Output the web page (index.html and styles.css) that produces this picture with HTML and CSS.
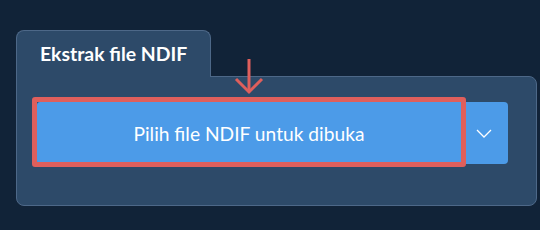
FILE: index.html
```html
<!DOCTYPE html>
<html lang="id">
<head>
  <meta charset="UTF-8">
  <meta name="viewport" content="width=device-width, initial-scale=1.0">
  <title>Ekstrak file NDIF</title>
  <link rel="stylesheet" href="styles.css">
</head>
<body>
  <div class="wrap">
    <div class="tab">Ekstrak file NDIF</div>
    <div class="panel">
      <div class="btn-group">
        <button class="btn-main">Pilih file NDIF untuk dibuka</button>
        <button class="btn-drop">
          <svg width="16" height="9" viewBox="0 0 16 9">
            <polyline points="1,1 8,8 15,1" fill="none" stroke="#fff" stroke-width="1.3"/>
          </svg>
        </button>
      </div>
    </div>

    <!-- annotation -->
    <div class="hint-box"></div>
    <svg class="hint-arrow" width="32" height="38" viewBox="0 0 32 38">
      <line x1="16" y1="0" x2="16" y2="32" stroke="#df5f5c" stroke-width="3"/>
      <polyline points="3,20 16,33 29,20" fill="none" stroke="#df5f5c" stroke-width="3"/>
    </svg>
  </div>
</body>
</html>
```

FILE: styles.css
```css
body {
  margin: 0;
  background: #112338;
  font-family: Lato, "Open Sans", sans-serif;
}
.wrap {
  position: relative;
  padding: 30px 0 0 16px;
  height: 200px;
}
.tab {
  position: relative;
  z-index: 1;
  width: 170px;
  height: 46px;
  margin-bottom: -1px;
  padding: 0 0 0 23px;
  box-sizing: content-box;
  background: #2d4a69;
  border: 1px solid #4d6888;
  border-bottom: none;
  border-radius: 8px 8px 0 0;
  color: #fff;
  font-weight: bold;
  font-size: 19.4px;
  line-height: 46px;
}
.panel {
  width: 485px;
  height: 103px;
  padding: 25px 14px 0 20px;
  background: #2d4a69;
  border: 1px solid #4d6888;
  border-radius: 0 8px 8px 8px;
}
.btn-group {
  display: flex;
  height: 62px;
}
.btn-main,
.btn-drop {
  border: none;
  background: #4c9be8;
  color: #fff;
  font-family: inherit;
  padding: 0;
}
.btn-main {
  width: 424px;
  font-size: 19.2px;
  border-radius: 3px 0 0 3px;
}
.btn-drop {
  width: 47px;
  border-radius: 0 4px 4px 0;
  display: flex;
  align-items: center;
  justify-content: center;
  padding-right: 2px;
}
.hint-box {
  position: absolute;
  left: 32px;
  top: 97px;
  width: 424px;
  height: 60px;
  border: 5px solid #df5f5c;
  border-radius: 3px;
}
.hint-arrow {
  position: absolute;
  left: 233px;
  top: 59px;
}
```
